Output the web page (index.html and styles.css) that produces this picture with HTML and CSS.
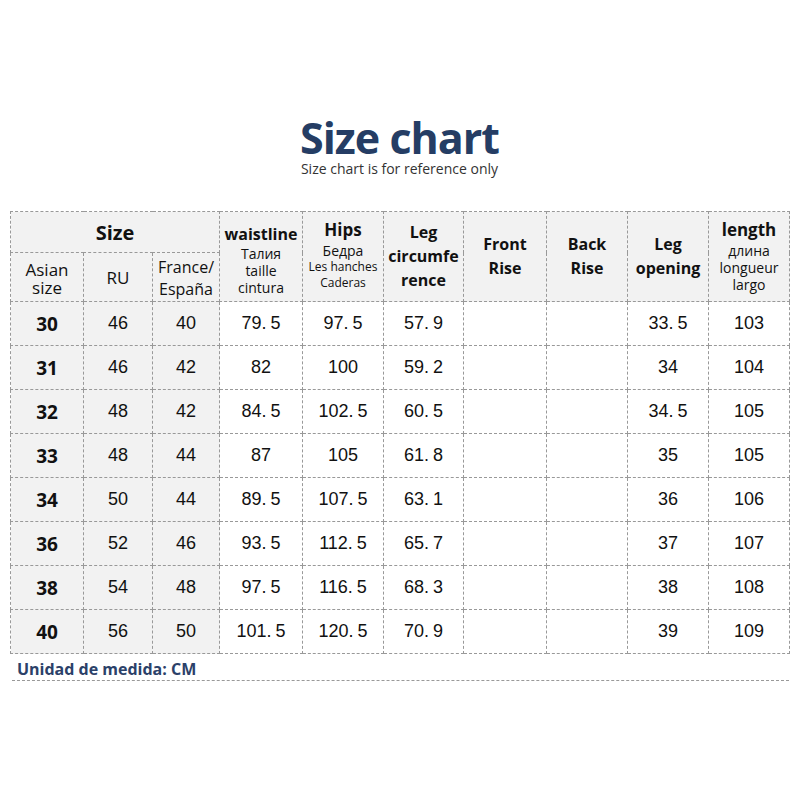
FILE: index.html
```html
<!DOCTYPE html>
<html>
<head>
<meta charset="utf-8">
<link rel="stylesheet" href="styles.css">
</head>
<body>
<div class="page">
  <header class="head">
    <h1 class="title">Size chart</h1>
    <p class="sub">Size chart is for reference only</p>
  </header>
  <table class="chart">
    <colgroup>
      <col class="w1"><col class="w2"><col class="w3"><col class="w4"><col class="w5">
      <col class="w6"><col class="w7"><col class="w8"><col class="w9"><col class="w10">
    </colgroup>
    <thead>
      <tr class="h1row">
        <th colspan="3" class="size-h">Size</th>
        <th rowspan="2" class="hc waist"><b class="big">waistline</b><span class="l">Талия</span><span class="l">taille</span><span class="l">cintura</span></th>
        <th rowspan="2" class="hc hips"><b class="big2">Hips</b><span class="l">Бедра</span><span class="s">Les hanches</span><span class="s">Caderas</span></th>
        <th rowspan="2" class="hc legc"><b class="b24">Leg</b><b class="b24">circumfe</b><b class="b24">rence</b></th>
        <th rowspan="2" class="hc rise"><b class="b24">Front</b><b class="b24">Rise</b></th>
        <th rowspan="2" class="hc rise"><b class="b24">Back</b><b class="b24">Rise</b></th>
        <th rowspan="2" class="hc rise"><b class="b24">Leg</b><b class="b24">opening</b></th>
        <th rowspan="2" class="hc len"><b class="big2">length</b><span class="l">длина</span><span class="l">longueur</span><span class="l">largo</span></th>
      </tr>
      <tr class="h2row">
        <th class="sc asian"><span class="l17">Asian</span><span class="l17">size</span></th>
        <th class="sc ru">RU</th>
        <th class="sc fr"><span class="l22">France/</span><span class="l22">España</span></th>
      </tr>
    </thead>
    <tbody>
      <tr><td class="g sz">30</td><td class="g">46</td><td class="g">40</td><td>79<span class="pt">.</span>5</td><td>97<span class="pt">.</span>5</td><td>57<span class="pt">.</span>9</td><td></td><td></td><td>33<span class="pt">.</span>5</td><td>103</td></tr>
      <tr><td class="g sz">31</td><td class="g">46</td><td class="g">42</td><td>82</td><td>100</td><td>59<span class="pt">.</span>2</td><td></td><td></td><td>34</td><td>104</td></tr>
      <tr><td class="g sz">32</td><td class="g">48</td><td class="g">42</td><td>84<span class="pt">.</span>5</td><td>102<span class="pt">.</span>5</td><td>60<span class="pt">.</span>5</td><td></td><td></td><td>34<span class="pt">.</span>5</td><td>105</td></tr>
      <tr><td class="g sz">33</td><td class="g">48</td><td class="g">44</td><td>87</td><td>105</td><td>61<span class="pt">.</span>8</td><td></td><td></td><td>35</td><td>105</td></tr>
      <tr><td class="g sz">34</td><td class="g">50</td><td class="g">44</td><td>89<span class="pt">.</span>5</td><td>107<span class="pt">.</span>5</td><td>63<span class="pt">.</span>1</td><td></td><td></td><td>36</td><td>106</td></tr>
      <tr><td class="g sz">36</td><td class="g">52</td><td class="g">46</td><td>93<span class="pt">.</span>5</td><td>112<span class="pt">.</span>5</td><td>65<span class="pt">.</span>7</td><td></td><td></td><td>37</td><td>107</td></tr>
      <tr><td class="g sz">38</td><td class="g">54</td><td class="g">48</td><td>97<span class="pt">.</span>5</td><td>116<span class="pt">.</span>5</td><td>68<span class="pt">.</span>3</td><td></td><td></td><td>38</td><td>108</td></tr>
      <tr><td class="g sz">40</td><td class="g">56</td><td class="g">50</td><td>101<span class="pt">.</span>5</td><td>120<span class="pt">.</span>5</td><td>70<span class="pt">.</span>9</td><td></td><td></td><td>39</td><td>109</td></tr>
    </tbody>
  </table>
  <div class="unit">Unidad de medida: CM</div>
</div>
</body>
</html>
```

FILE: styles.css
```css
html, body {
  margin: 0;
  padding: 0;
  background: #ffffff;
}

.page {
  width: 779px;
  padding: 116px 0 0 10px;
  font-family: "Open Sans", "Noto Sans", sans-serif;
}

.head {
  display: flex;
  flex-direction: column;
  align-items: center;
  height: 95px;
}

.title {
  margin: 0;
  font-size: 43px;
  line-height: 43px;
  font-weight: 700;
  color: #253d64;
  letter-spacing: -1px;
}

.sub {
  margin: 1px 0 0;
  font-size: 14px;
  line-height: 18px;
  color: #333333;
}

.chart {
  width: 779px;
  border-collapse: collapse;
  table-layout: fixed;
  border: 1px dashed #999999;
}

.w1 { width: 73px; }
.w2 { width: 69px; }
.w3 { width: 67px; }
.w4 { width: 83px; }
.w5 { width: 81px; }
.w6 { width: 80px; }
.w7 { width: 83px; }
.w8 { width: 81px; }
.w9 { width: 81px; }
.w10 { width: 81px; }

.chart th,
.chart td {
  border: 1px dashed #999999;
  padding: 0;
  text-align: center;
  color: #111111;
}

.chart th {
  background: #f2f2f2;
  font-weight: 400;
}

.h1row { height: 41px; }
.h2row { height: 49px; }

.chart th.size-h {
  font-size: 20px;
  font-weight: 700;
  padding-top: 0;
}

.chart th.hc {
  vertical-align: top;
}

.hc b, .hc span { display: block; }

.big {
  font-size: 16px;
  line-height: 22px;
}

.big2 {
  font-size: 17px;
  line-height: 24px;
}

.l {
  font-size: 14px;
  line-height: 17px;
}

.s {
  font-size: 12px;
  line-height: 16px;
}

.b24 {
  font-size: 16px;
  line-height: 24px;
}

.chart th.waist { padding-top: 11px; }
.chart th.hips { padding-top: 6px; }
.chart th.len { padding-top: 6px; }
.chart th.legc { padding-top: 8px; }
.chart th.rise { padding-top: 20px; }

.sc span { display: block; }

.chart th.asian, .chart th.ru { font-size: 17px; }
.chart th.asian { padding-top: 4px; }
.l17 { line-height: 18px; }
.chart th.fr { font-size: 16px; padding-top: 1px; }
.l22 { line-height: 22px; }

.chart td {
  height: 43px;
  font-family: "Liberation Sans", Arial, sans-serif;
  font-size: 18px;
  background: #ffffff;
}

.chart td.g { background: #f2f2f2; }

.chart td.sz {
  font-family: "Open Sans", sans-serif;
  font-weight: 700;
  font-size: 19px;
}

.pt { margin-right: 4px; }

.unit {
  margin-left: 2px;
  padding: 4px 5px 0;
  font-size: 16px;
  font-weight: 700;
  color: #2b4169;
  border-bottom: 1px dashed #999999;
}
```
